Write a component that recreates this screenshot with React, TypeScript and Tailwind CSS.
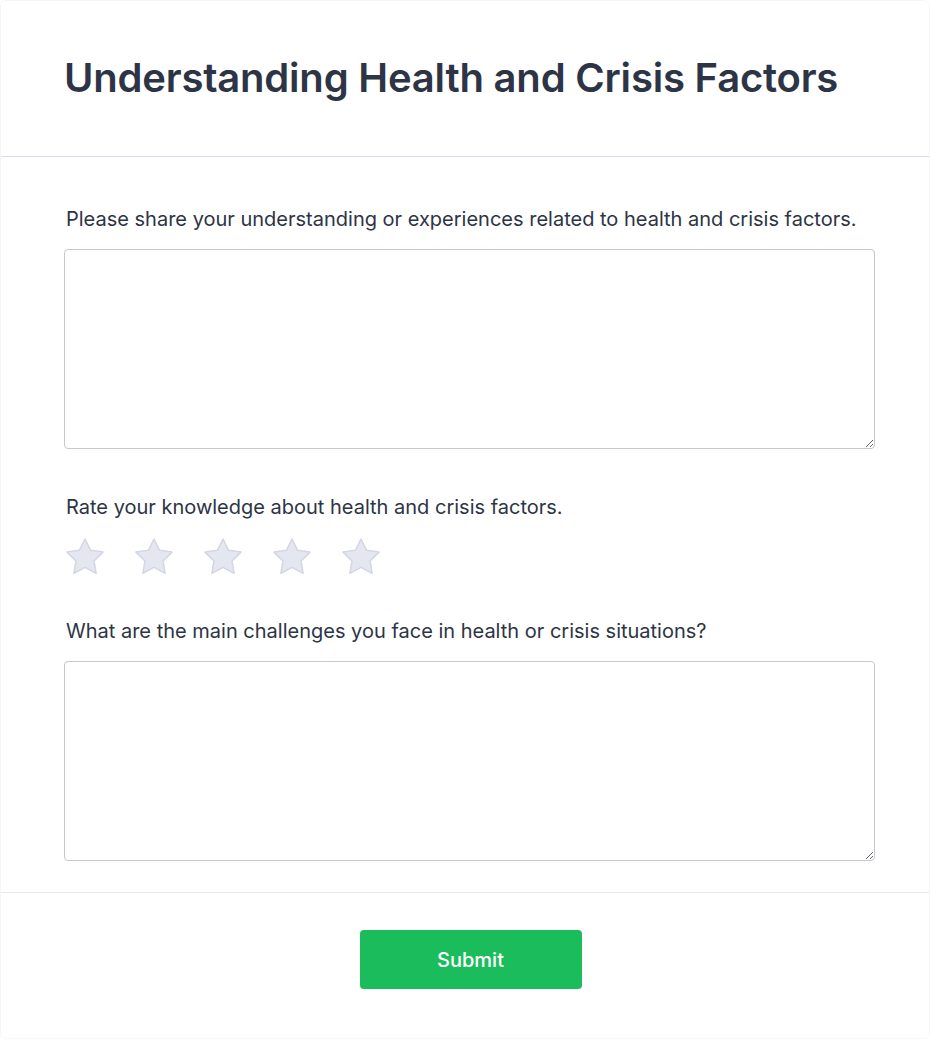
import { useState } from 'react'

const questions = {
  share: 'Please share your understanding or experiences related to health and crisis factors.',
  rate: 'Rate your knowledge about health and crisis factors.',
  challenges: 'What are the main challenges you face in health or crisis situations?',
}

function Star({ active }: { active: boolean }) {
  return (
    <svg viewBox="0 0 24 24" className="h-[46px] w-[46px]" aria-hidden="true">
      <path
        d="M12 2.6l2.9 5.9 6.5.95-4.7 4.6 1.1 6.45L12 17.45 6.2 20.5l1.1-6.45-4.7-4.6 6.5-.95L12 2.6z"
        fill={active ? '#facc15' : '#e5e7f0'}
        stroke={active ? '#eab308' : '#d4d7e3'}
        strokeWidth="0.8"
        strokeLinejoin="round"
      />
    </svg>
  )
}

export default function App() {
  const [rating, setRating] = useState(0)

  return (
    <div className="min-h-screen bg-white font-['Inter',sans-serif] text-[#2d3445]">
      <div className="flex h-[1039px] flex-col rounded-md border border-[#f6f6f9]">
        {/* Header */}
        <div className="border-b border-[#dcdde6] pl-[63px] pt-[57px] pb-[58px]">
          <h1 className="text-[40px] font-semibold leading-10 tracking-[-0.2px]">
            Understanding Health and Crisis Factors
          </h1>
        </div>

        {/* Questions */}
        <div className="flex-1 border-b border-[#e8e9ef] pl-[63px] pr-[54px] pt-12">
          <label className="block pl-[2px] text-xl leading-7">{questions.share}</label>
          <textarea className="mt-4 block h-[200px] w-full rounded border border-[#c5c7d5] bg-white p-3 text-base outline-none" />

          <p className="mt-[44px] pl-[2px] text-xl leading-7">{questions.rate}</p>
          <div className="-ml-[2px] mt-[13px] flex gap-[23px]">
            {[1, 2, 3, 4, 5].map((n) => (
              <button key={n} onClick={() => setRating(n)}>
                <Star active={n <= rating} />
              </button>
            ))}
          </div>

          <label className="mt-[37px] block pl-[2px] text-xl leading-7">{questions.challenges}</label>
          <textarea className="mt-4 block h-[200px] w-full rounded border border-[#c5c7d5] bg-white p-3 text-base outline-none" />
        </div>

        {/* Footer */}
        <div className="flex justify-center pl-[64px] pr-[53px] pt-[37px] pb-[49px]">
          <button className="h-[59px] w-[222px] rounded bg-[#1abc5c] text-xl font-medium text-white">
            Submit
          </button>
        </div>
      </div>
    </div>
  )
}
